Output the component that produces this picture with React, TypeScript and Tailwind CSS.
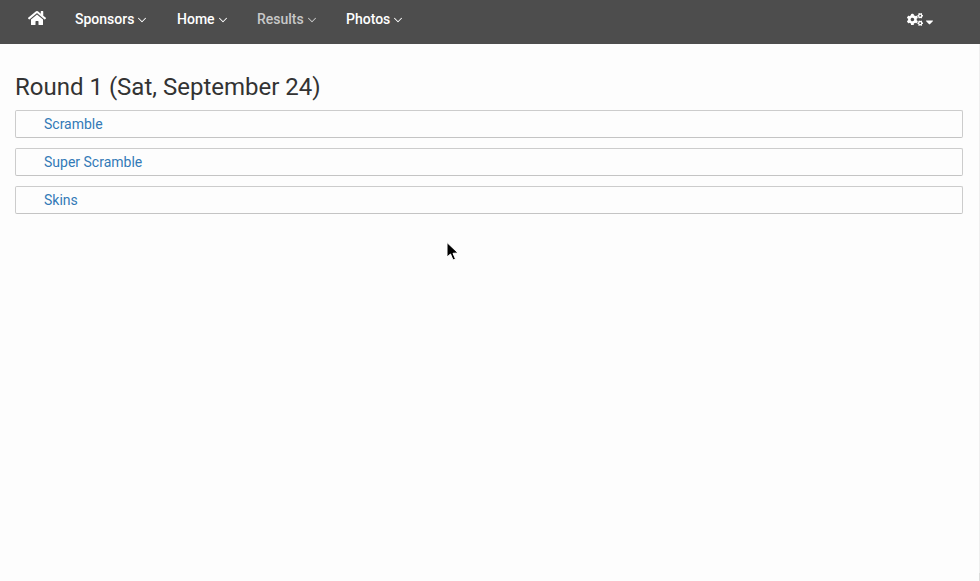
import { FaHome, FaCogs, FaCaretDown } from "react-icons/fa";
import { ChevronDown } from "lucide-react";

const items = [
  { label: "Sponsors", cls: "text-white", w: "w-[102px]" },
  { label: "Home", cls: "text-white", w: "w-[80px]" },
  { label: "Results", cls: "text-[#c8c8c8]", w: "w-[89px]" },
  { label: "Photos", cls: "text-white", w: "w-[80px]" },
];

const rows = ["Scramble", "Super Scramble", "Skins"];

export default function App() {
  return (
    <div className="relative h-[581px] w-[980px] overflow-hidden bg-[#fdfdfd] font-['Roboto',sans-serif]">
      <nav className="flex h-[44px] items-start bg-[#4d4d4d]">
        <div className="flex w-[75px] justify-start pl-[28px] pt-[10px] text-white">
          <FaHome className="h-[16px] w-[18px]" />
        </div>
        <div className="flex pt-[9px]">
          {items.map((it) => (
            <div key={it.label} className={`flex items-center text-[14px] leading-[20px] font-medium ${it.cls} ${it.w}`}>
              <span>{it.label}</span>
              <ChevronDown className="mt-[1px] ml-[1px]" size={14} strokeWidth={1.8} />
            </div>
          ))}
        </div>
        <div className="ml-auto mr-[45px] flex items-center pt-[10px] text-white">
          <FaCogs className="h-[15px] w-[16px]" />
          <FaCaretDown className="mt-[6px] ml-[1px] h-[12px] w-[11px]" />
        </div>
      </nav>
      <main className="px-[15px] pt-[28px]">
        <h1 className="h-[38px] text-[24px] leading-[30px] font-normal text-[#333333]">Round 1 (Sat, September 24)</h1>
        <div className="flex w-[948px] flex-col gap-[10px]">
          {rows.map((r) => (
            <div key={r} className="h-[28px] rounded-[2px] border border-[#cccccc] border-b-[#c4c4c4] bg-[#fdfdfd] pl-[28px] text-[14px] leading-[26px] text-[#337ab7]">
              {r}
            </div>
          ))}
        </div>
      </main>
      <div className="absolute right-0 top-[44px] bottom-0 w-[1px] bg-[#efefef]" />
      <div className="absolute right-0 bottom-0 h-[8px] w-[1px] bg-[#dcdcdc]" />
      <svg className="absolute left-[445px] top-[241px]" width="15" height="21" viewBox="0 0 15 21">
        <path d="M2 1.5 L2 16 L5.5 13 L8 19 L10.5 18 L8 12.3 L13 12 Z" fill="#000" stroke="#fff" strokeWidth="1" />
      </svg>
    </div>
  );
}
